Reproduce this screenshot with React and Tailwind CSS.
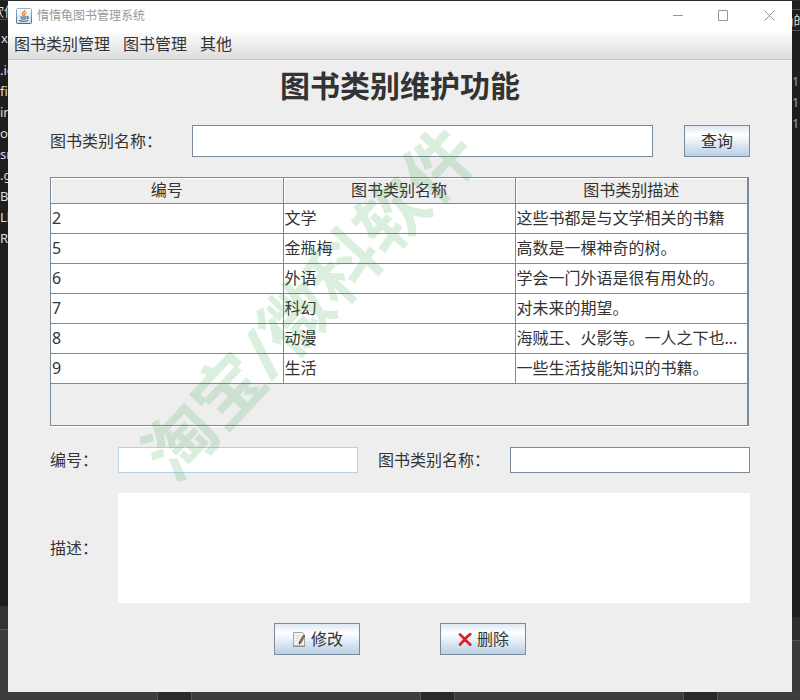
// Ventana de mantenimiento de categorias de libros. Busqueda arriba, tabla
// en el centro y formulario de edicion debajo.

import { useState } from 'react';

const CATEGORIAS = [
  { id: 2, nombre: '文学', desc: '这些书都是与文学相关的书籍' },
  { id: 5, nombre: '金瓶梅', desc: '高数是一棵神奇的树。' },
  { id: 6, nombre: '外语', desc: '学会一门外语是很有用处的。' },
  { id: 7, nombre: '科幻', desc: '对未来的期望。' },
  { id: 8, nombre: '动漫', desc: '海贼王、火影等。一人之下也...' },
  { id: 9, nombre: '生活', desc: '一些生活技能知识的书籍。' },
];

const MENUS = ['图书类别管理', '图书管理', '其他'];
const ARCHIVOS = ['.ic', 'fil', 'in', 'o', 'sr', '.g', 'B', 'Ll', 'R'];

function JavaIcon() {
  return (
    <svg width="16" height="16" viewBox="0 0 16 16" className="shrink-0">
      <defs>
        <linearGradient id="marco" x1="0" y1="0" x2="0" y2="1">
          <stop offset="0" stopColor="#9fb4c6" />
          <stop offset="1" stopColor="#3f6f99" />
        </linearGradient>
        <linearGradient id="fondo" x1="0" y1="0" x2="0" y2="1">
          <stop offset="0" stopColor="#fbfcfd" />
          <stop offset="1" stopColor="#cddbe6" />
        </linearGradient>
      </defs>
      <rect x="0.5" y="0.5" width="15" height="15" rx="1" fill="url(#fondo)" stroke="url(#marco)" />
      <path d="M8.800 2C9.200 4 5.600 4.600 6.500 6.400C6.800 7.200 7.600 7.700 7.800 8.300" fill="none" stroke="#e8862e" strokeWidth="1.500" />
      <path d="M10.400 4.300C8.600 5.100 8.200 5.900 8.900 6.800C9.200 7.300 9 7.800 8.600 8.200" fill="none" stroke="#e8862e" strokeWidth="1.100" />
      <path d="M4.500 8.700C5.500 9.500 9.500 9.400 10.500 8.800M5 10.500C6.500 11.200 9 11.200 10 10.500M10.800 8.700C13 8.200 12.800 10.400 10.800 10.900M3.500 12C3.200 13.500 11 13.600 12 12.200" fill="none" stroke="#416f9a" strokeWidth="1.100" />
    </svg>
  );
}

function EditarIcon() {
  return (
    <svg width="16" height="16" viewBox="0 0 16 16" className="shrink-0">
      <path d="M2.500 1.500H11.500L13.500 3.500V15H2.500Z" fill="#f2f2f2" stroke="#a5a5a5" />
      <path d="M2 15.300H14" stroke="#858585" />
      <path d="M4.500 5H9M4.500 7.500H8M4.500 10H7" stroke="#dadada" />
      <path d="M12.200 4L8.600 10.300L8 13.200L10.400 11.400L13.800 5Z" fill="#9a7350" stroke="#5e4a3c" strokeWidth="0.600" />
      <path d="M8 13.200L8.500 11.100L9.800 11.800Z" fill="#222" />
    </svg>
  );
}

function BorrarIcon() {
  return (
    <svg width="16" height="16" viewBox="0 0 16 16" className="shrink-0">
      <path d="M3 3.500Q6.500 6.500 8.300 8.800Q10.500 11.300 13.300 13.600M13.300 3.200Q9.500 6 7.800 8.400Q5.500 11 3 13.600" fill="none" stroke="#d8232a" strokeWidth="2.800" strokeLinecap="round" />
    </svg>
  );
}

function Boton({ children, className }) {
  return (
    <button
      type="button"
      className={
        'h-8 shrink-0 flex items-center justify-center gap-1 border border-[#7a8a99] ' +
        'bg-linear-to-b from-[#dde8f3] via-white via-30% to-[#b8cfe5] ' +
        className
      }
    >
      {children}
    </button>
  );
}

function BarraTitulo() {
  const control = 'w-[46px] h-full flex items-center justify-center';
  return (
    <header className="h-[29px] flex items-center bg-white pl-2">
      <JavaIcon />
      <span className="ml-[5px] flex-1 text-xs text-[#999]">惰惰龟图书管理系统</span>
      <button type="button" aria-label="最小化" className={control}>
        <svg width="11" height="11" stroke="#999"><path d="M1 5.500H11" /></svg>
      </button>
      <button type="button" aria-label="最大化" className={control}>
        <svg width="11" height="11" stroke="#999" fill="none"><path d="M0.500 0.500H9.500V10.500H0.500Z" /></svg>
      </button>
      <button type="button" aria-label="关闭" className={control}>
        <svg width="11" height="11" stroke="#999"><path d="M0.500 0.500L10.500 10.500M10.500 0.500L0.500 10.500" /></svg>
      </button>
    </header>
  );
}

function TablaCategorias({ onElegir }) {
  return (
    <div className="h-[249px] mb-px mr-px border border-r-2 border-[#7a8a99] shadow-[0_1px_0_#fff]">
      <table className="w-full table-fixed border-collapse">
        <thead>
          <tr className="h-[25px] border-b border-[#7a8a99]">
            {['编号', '图书类别名称', '图书类别描述'].map((t) => (
              <th key={t} className="p-0 font-normal border-r border-[#7a8a99] last:border-r-0 shadow-[inset_1px_1px_0_#fff]">
                {t}
              </th>
            ))}
          </tr>
        </thead>
        <tbody>
          {CATEGORIAS.map((c) => (
            <tr key={c.id} onClick={() => onElegir(c)} className="h-[30px] bg-white border-b border-[#7a8a99]">
              <td className="px-px py-0 border-r border-[#7a8a99]">{c.id}</td>
              <td className="px-px py-0 border-r border-[#7a8a99] truncate">{c.nombre}</td>
              <td className="px-px py-0 truncate">{c.desc}</td>
            </tr>
          ))}
        </tbody>
      </table>
    </div>
  );
}

function App() {
  const [busqueda, setBusqueda] = useState('');
  const [form, setForm] = useState({ id: '', nombre: '', desc: '' });

  return (
    <div lang="zh-CN" className="min-h-screen flex flex-col pt-px bg-[#2b2b2b] text-base leading-6 text-[#333] font-['Noto_Sans','Noto_Sans_CJK_SC',sans-serif]">
      <div className="flex-1 flex">
        {/* Editor que asoma por la izquierda */}
        <div className="w-2 shrink-0 flex flex-col overflow-hidden whitespace-nowrap bg-[#1e1e1e] text-[13px] leading-[21px] text-[#ddd]">
          <div className="h-[19px] shrink-0 flex justify-center border-b border-[#555]">软件</div>
          <div className="h-10 shrink-0 pt-2 flex justify-end">x</div>
          {ARCHIVOS.map((a) => (
            <div key={a}>{a}</div>
          ))}
          <div className="mt-auto h-6 border-b border-[#555] bg-[#333]" />
          <div className="h-[62px] bg-[#3d3d3d]" />
        </div>

        <div className="relative flex-1 min-w-0 bg-[#eee] overflow-hidden">
          <BarraTitulo />
          <nav className="h-[30px] flex items-center gap-[13px] px-1.5 pb-px border-b border-[#c8c8c8] bg-linear-to-b from-white to-[#dcdcdc]">
            {MENUS.map((m) => (
              <button type="button" key={m}>{m}</button>
            ))}
          </nav>

          <main className="px-[42px] pb-9">
            <h1 className="mb-[13px] text-center text-3xl leading-[52px] font-bold">图书类别维护功能</h1>

            <div className="flex flex-col gap-5">
              <div className="flex items-center">
                <label htmlFor="buscar" className="w-[142px] shrink-0">图书类别名称：</label>
                <input
                  id="buscar"
                  value={busqueda}
                  onChange={(e) => setBusqueda(e.target.value)}
                  className="h-8 min-w-0 flex-1 mr-[31px] px-1 bg-white border border-[#7a8a99]"
                />
                <Boton className="w-[66px]">查询</Boton>
              </div>

              <TablaCategorias onElegir={setForm} />

              <div className="flex items-center">
                <label htmlFor="id" className="w-[68px] shrink-0">编号：</label>
                <input
                  id="id"
                  readOnly
                  value={form.id}
                  className="h-[26px] min-w-0 flex-1 px-1 bg-white border border-[#b8cfe5]"
                />
                <label htmlFor="nombre" className="ml-5 w-[132px] shrink-0">图书类别名称：</label>
                <input
                  id="nombre"
                  value={form.nombre}
                  onChange={(e) => setForm({ ...form, nombre: e.target.value })}
                  className="h-[26px] min-w-0 flex-1 px-1 bg-white border border-[#7a8a99]"
                />
              </div>

              <div className="flex items-center">
                <label htmlFor="desc" className="w-[68px] shrink-0">描述：</label>
                <textarea
                  id="desc"
                  value={form.desc}
                  onChange={(e) => setForm({ ...form, desc: e.target.value })}
                  className="h-[110px] min-w-0 flex-1 resize-none bg-white"
                />
              </div>

              <div className="flex justify-center gap-20">
                <Boton className="w-[86px]"><EditarIcon />修改</Boton>
                <Boton className="w-[86px]"><BorrarIcon />删除</Boton>
              </div>
            </div>
          </main>

          {/* Marca de agua en diagonal */}
          <div className="absolute left-[301px] top-[301px] -translate-x-1/2 -translate-y-1/2 -rotate-47 whitespace-nowrap text-[70px] leading-none font-bold text-[#28a03c]/17 pointer-events-none select-none">
            淘宝/微科软件
          </div>
        </div>

        {/* Editor que asoma por la derecha */}
        <div className="w-2 shrink-0 flex flex-col overflow-hidden whitespace-nowrap bg-[#1e1e1e] text-[13px] leading-[21px] text-[#6fa8dc]">
          <div className="mt-2 h-[22px] shrink-0 flex justify-center border-y border-[#555] text-[#ddd]">g的</div>
          <div className="mt-10">1</div>
          <div>1</div>
          <div>1</div>
          <div className="mt-auto h-6 border-b border-[#555] bg-[#2d2d2d]" />
          <div className="h-[51px] bg-[#3a3a3a]" />
        </div>
      </div>

      <div className="h-2 flex bg-[#3d3d3d]">
        <div className="w-[157px]" />
        <div className="w-[35px] border-x border-[#555] bg-[#2a2a2a]" />
        <div className="w-[228px]" />
        <div className="w-[35px] border-x border-[#555] bg-[#2a2a2a]" />
        <div className="w-[228px]" />
        <div className="w-[35px] border-x border-[#555] bg-[#2a2a2a]" />
      </div>
    </div>
  );
}

export default App;
